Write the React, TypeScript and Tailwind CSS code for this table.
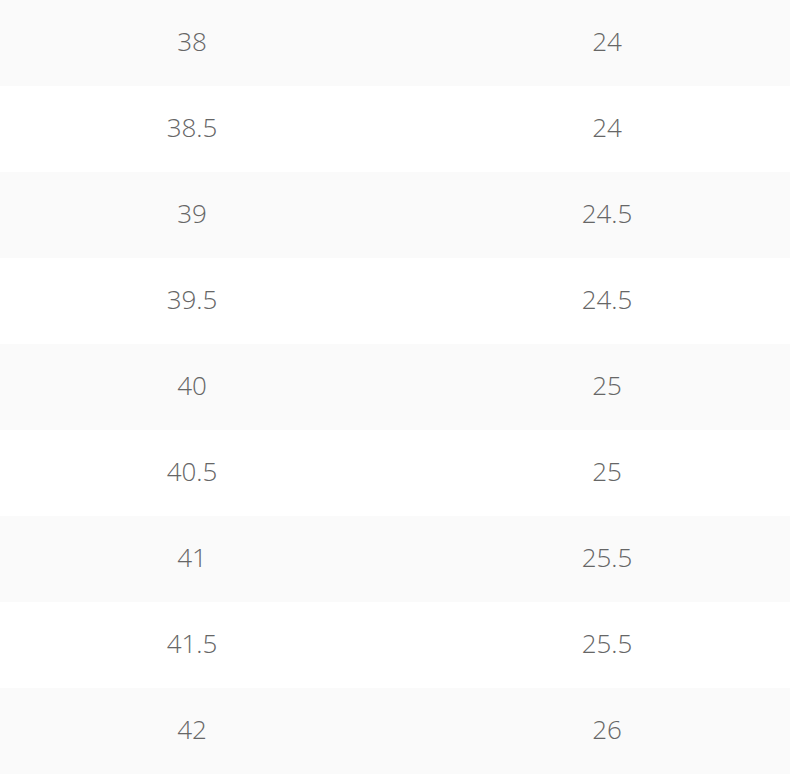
const rows: [string, string][] = [
  ["38", "24"],
  ["38.5", "24"],
  ["39", "24.5"],
  ["39.5", "24.5"],
  ["40", "25"],
  ["40.5", "25"],
  ["41", "25.5"],
  ["41.5", "25.5"],
  ["42", "26"],
];

export default function App() {
  return (
    <div className="w-[790px] overflow-hidden bg-white font-['Open_Sans',sans-serif] text-[26px] font-light text-[#666666]">
      {rows.map(([eu, cm], i) => (
        <div
          key={i}
          className={`flex h-[86px] items-center pb-[3px] ${i % 2 === 0 ? "bg-[#fafafa]" : "bg-white"}`}
        >
          <div className="w-[384px] shrink-0 text-center">{eu}</div>
          <div className="w-[446px] shrink-0 text-center">{cm}</div>
        </div>
      ))}
    </div>
  );
}
